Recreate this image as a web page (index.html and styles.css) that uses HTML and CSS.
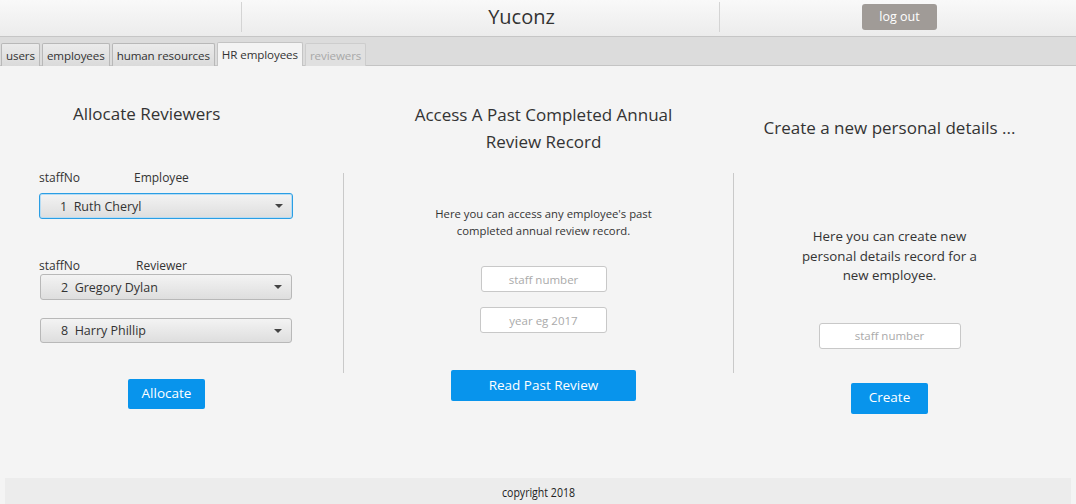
FILE: index.html
```html
<!DOCTYPE html>
<html>
<head>
<meta charset="utf-8">
<link rel="stylesheet" href="styles.css">
</head>
<body>
<div class="app">
  <header class="topbar">
    <div class="top-left"></div>
    <div class="top-center">Yuconz</div>
    <div class="top-right"><button class="logout">log out</button></div>
  </header>
  <nav class="tabs">
    <div class="tab">users</div>
    <div class="tab">employees</div>
    <div class="tab">human resources</div>
    <div class="tab selected">HR employees</div>
    <div class="tab disabled">reviewers</div>
  </nav>
  <main class="content">
    <section class="col col-left">
      <h2 class="title left-title">Allocate Reviewers</h2>
      <div class="labels labels-1"><span class="lbl-staff">staffNo</span><span class="lbl-name">Employee</span></div>
      <div class="combo focused"><span class="combo-text">1&nbsp;&nbsp;Ruth Cheryl</span><span class="arrow"></span></div>
      <div class="labels labels-2"><span class="lbl-staff">staffNo</span><span class="lbl-name lbl-rev">Reviewer</span></div>
      <div class="combo combo-2"><span class="combo-text">2&nbsp;&nbsp;Gregory Dylan</span><span class="arrow"></span></div>
      <div class="combo combo-3"><span class="combo-text">8&nbsp;&nbsp;Harry Phillip</span><span class="arrow"></span></div>
      <button class="btn btn-allocate">Allocate</button>
    </section>
    <div class="divider"></div>
    <section class="col col-mid">
      <h2 class="title mid-title">Access A Past Completed Annual<br>Review Record</h2>
      <p class="desc mid-desc">Here you can access any employee's past<br>completed annual review record.</p>
      <div class="field field-mid1">staff number</div>
      <div class="field field-mid2">year eg 2017</div>
      <button class="btn btn-read">Read Past Review</button>
    </section>
    <div class="divider"></div>
    <section class="col col-right">
      <h2 class="title right-title">Create a new personal details ...</h2>
      <p class="desc right-desc">Here you can create new<br>personal details record for a<br>new employee.</p>
      <div class="field field-right">staff number</div>
      <button class="btn btn-create">Create</button>
    </section>
  </main>
  <footer class="footer"><span>copyright 2018</span></footer>
</div>
</body>
</html>
```
FILE: styles.css
```css
* { box-sizing: border-box; }
html, body { margin: 0; padding: 0; }
body {
  width: 1076px;
  height: 504px;
  overflow: hidden;
  background: #f4f4f4;
  font-family: "Open Sans", "Noto Sans", sans-serif;
  color: #333;
}
.app { display: flex; flex-direction: column; height: 504px; }

.topbar {
  height: 37px;
  display: grid;
  grid-template-columns: 242px 478px 1fr;
  background: linear-gradient(#f9f9f9, #ececec);
  border-bottom: 1px solid #c6c6c6;
}
.top-left { border-right: 1px solid #d4d4d4; margin: 2px 0 4px; }
.top-center {
  display: flex; align-items: center; justify-content: center;
  font-size: 20px; color: #333; padding: 0 0 2px 82px;
  border-right: 1px solid #d4d4d4; margin: 2px 0 4px;
}
.top-right { display: flex; align-items: flex-start; padding: 4px 0 0 142px; }
.logout {
  width: 75px; height: 26px;
  background: #a09b97; color: #fff; border: none; border-radius: 3px;
  font-family: inherit; font-size: 12.5px; padding: 0 0 2px;
}

.tabs {
  height: 29px;
  display: flex;
  align-items: flex-end;
  gap: 2px;
  padding-left: 1px;
  background: #dcdcdc;
  border-bottom: 1px solid #c4c4c4;
}
.tab {
  height: 23px;
  padding: 0 4px;
  display: flex; align-items: center;
  font-size: 11.6px; color: #333;
  letter-spacing: -0.1px;
  background: linear-gradient(#ebebeb, #dadada);
  border: 1px solid #b8b8b8;
  border-bottom: none;
  border-radius: 2px 2px 0 0;
  margin-bottom: -1px;
}
.tab.selected { background: #f4f4f4; height: 24px; border-color: #c4c4c4; }
.tab.disabled { color: #a8a8a8; border-color: #cdcdcd; background: #e0e0e0; }

.content {
  flex: 1;
  display: grid;
  grid-template-columns: 343px 1px 389px 1px 1fr;
}
.divider { background: #c9c9c9; margin-top: 107px; height: 200px; }
.col { display: flex; flex-direction: column; }

.title { margin: 0; font-weight: normal; font-size: 17px; line-height: 27px; color: #333; }
.desc { margin: 0; color: #333; }

/* left */
.col-left { padding: 34px 0 0 39px; }
.left-title { padding-left: 34px; }
.labels { font-size: 12px; line-height: 16px; display: flex; }
.labels-1 { margin-top: 43px; }
.labels-2 { margin-top: 39px; }
.lbl-staff { width: 95px; }
.lbl-rev { padding-left: 2px; }
.combo {
  width: 254px; height: 26px;
  display: flex; align-items: center; justify-content: space-between;
  padding: 0 9px 0 20px;
  margin-top: 7px;
  background: linear-gradient(#f3f3f3, #dedede);
  border: 1px solid #b8b8b8;
  border-radius: 3px;
  font-size: 12.5px; color: #333;
}
.combo.focused { border: 1px solid #2a9ee4; box-shadow: inset 0 0 0 1px #b6dcf4; }
.combo-2 { margin-top: 0; width: 252px; margin-left: 1px; }
.combo-3 { margin-top: 18px; width: 252px; margin-left: 1px; height: 25px; }
.arrow {
  width: 0; height: 0;
  border-left: 4px solid transparent;
  border-right: 4px solid transparent;
  border-top: 4px solid #444;
}
.btn {
  height: 31px;
  background: #0894ec; color: #fff;
  border: none; border-radius: 2px;
  font-family: inherit; font-size: 13.5px;
  padding: 0 0 2px;
}
.btn-allocate { width: 77px; margin: 36px 0 0 89px; height: 30px; }

/* middle */
.col-mid { align-items: center; padding: 35px 0 0 10px; }
.mid-title { text-align: center; }
.mid-desc { font-size: 11.3px; line-height: 17px; text-align: center; margin-top: 50px; }
.field {
  height: 26px;
  background: #fff;
  border: 1px solid #c8c8c8;
  border-radius: 3px;
  display: flex; align-items: center; justify-content: center;
  font-size: 11.5px; color: #aaa;
}
.field-mid1 { width: 126px; margin-top: 27px; }
.field-mid2 { width: 127px; margin-top: 15px; }
.btn-read { width: 185px; margin-top: 37px; }

/* right */
.col-right { align-items: center; padding: 48px 31px 0 0; }
.right-title { text-align: center; }
.right-desc { font-size: 13.3px; line-height: 19.5px; text-align: center; margin-top: 86px; }
.field-right { width: 142px; margin-top: 37px; }
.btn-create { width: 77px; margin-top: 34px; }

.footer {
  height: 26px;
  margin: 0 5px;
  background: #ececec;
  display: flex; align-items: center; justify-content: center;
  font-size: 12px; color: #222;
}
.footer span { display: inline-block; transform: scaleX(0.88); padding-top: 2px; }
```
